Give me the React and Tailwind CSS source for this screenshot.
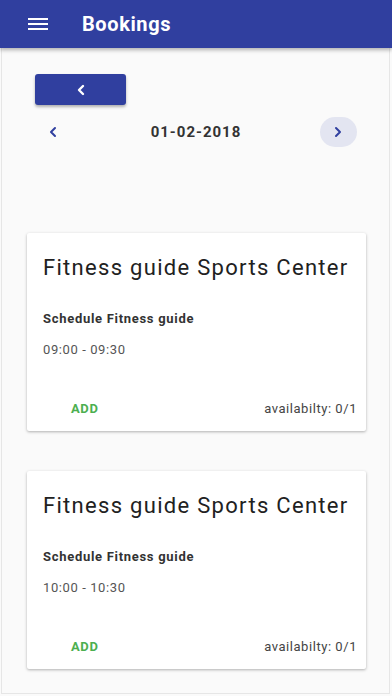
import React from "react";

function Card({ time }) {
  return (
    <div className="bg-white rounded-[2px] shadow-[0_1px_3px_rgba(0,0,0,0.3)] h-[198px] flex flex-col pl-[16px] pr-[9px]">
      <div className="text-[22px] leading-[26px] text-[#212121] mt-[22px] tracking-[1.3px] whitespace-nowrap">Fitness guide Sports Center</div>
      <div className="text-[13px] font-bold text-[#333] mt-[30px] leading-[16px] tracking-[0.7px]">Schedule Fitness guide</div>
      <div className="text-[13px] text-[#555] mt-[15px] leading-[16px] tracking-[0.6px]">{time}</div>
      <div className="flex items-center justify-between mt-auto mb-[13px]">
        <span className="text-[13px] font-bold text-[#4caf50] ml-[28px] tracking-[0.6px]">ADD</span>
        <span className="text-[13px] text-[#444] tracking-[0.55px]">availabilty: 0/1</span>
      </div>
    </div>
  );
}

export default function App() {
  return (
    <div className="w-[392px] h-[696px] bg-[#fafafa] flex flex-col overflow-hidden" style={{ fontFamily: "Roboto, 'Noto Sans', sans-serif" }}>
      <div className="h-[48px] bg-[#303f9f] flex items-center shadow-[0_2px_4px_rgba(0,0,0,0.3)] z-10 shrink-0">
        <svg width="20" height="14" viewBox="0 0 20 14" className="ml-[28px]">
          <rect x="0" y="1" width="20" height="2" fill="white" />
          <rect x="0" y="6" width="20" height="2" fill="white" />
          <rect x="0" y="11" width="20" height="2" fill="white" />
        </svg>
        <span className="ml-[34px] text-white text-[20px] font-bold tracking-[0.6px]">Bookings</span>
      </div>
      <div className="flex-1 ml-px mr-[2px] mb-[2px] border border-t-0 border-[#e6e6e6] flex flex-col">
        <div className="px-[33px] pt-[26px]">
          <button className="w-[91px] h-[31px] bg-[#303f9f] rounded-[3px] shadow-[0_2px_3px_rgba(0,0,0,0.3)] flex items-center justify-center">
            <svg width="10" height="12" viewBox="0 0 10 12">
              <path d="M7 2 L3 6 L7 10" stroke="white" strokeWidth="2.4" fill="none" strokeLinecap="round" strokeLinejoin="round" />
            </svg>
          </button>
        </div>
        <div className="flex items-center justify-between pl-[46px] pr-[32px] mt-[12px] h-[30px]">
          <svg width="10" height="12" viewBox="0 0 10 12">
            <path d="M7 2 L3 6 L7 10" stroke="#303f9f" strokeWidth="2" fill="none" strokeLinecap="round" strokeLinejoin="round" />
          </svg>
          <span className="text-[15px] font-bold text-[#333] ml-[14px] tracking-[1px]">01-02-2018</span>
          <div className="w-[37px] h-[30px] rounded-full bg-[#e3e5f1] flex items-center justify-center">
            <svg width="10" height="12" viewBox="0 0 10 12">
              <path d="M3 2 L7 6 L3 10" stroke="#303f9f" strokeWidth="2" fill="none" strokeLinecap="round" strokeLinejoin="round" />
            </svg>
          </div>
        </div>
        <div className="flex flex-col gap-[40px] pl-[25px] pr-[23px] mt-[86px]">
          <Card time="09:00 - 09:30" />
          <Card time="10:00 - 10:30" />
        </div>
      </div>
    </div>
  );
}
